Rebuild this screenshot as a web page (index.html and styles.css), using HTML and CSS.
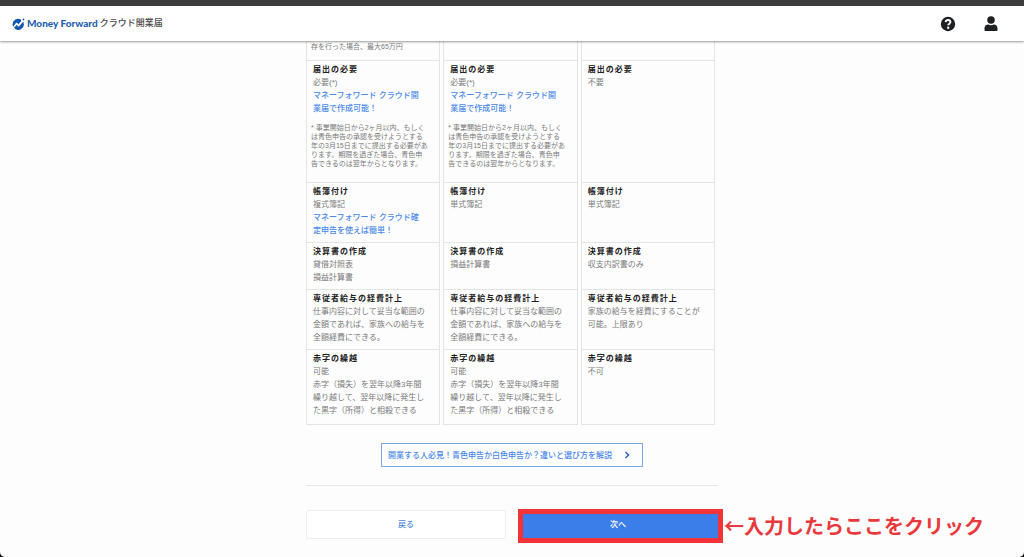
FILE: index.html
```html
<!DOCTYPE html>
<html lang="ja">
<head>
<meta charset="utf-8">
<meta name="viewport" content="width=device-width, initial-scale=1">
<title>Money Forward クラウド開業届</title>
<link rel="stylesheet" href="styles.css">
</head>
<body>
<div class="page">
  <header class="header">
    <a class="logo" href="#">
      <svg class="logo-mark" viewBox="0 0 26 24" aria-hidden="true">
        <path fill="#1459b0" d="M18 3.2A11 11 0 0 0 1 12.5c0 1.8.4 3.500 1.200 5L8 10.200c.8-1 2-.9 2.700 0l2 2.800 5.500-6.500z"/>
        <path fill="#1459b0" d="M4 19.500A11 11 0 0 0 23 9l-1-1.500-7.500 8.800c-.8 1-2 1-2.800 0l-2.200-2.900z"/>
        <circle cx="23" cy="3" r="1.800" fill="#1459b0"/>
      </svg>
      <span class="logo-name">Money Forward</span>
      <span class="logo-product">クラウド開業届</span>
    </a>
    <nav class="header-nav">
      <button class="icon-button" type="button" aria-label="ヘルプ">
        <svg class="icon" viewBox="0 0 16 16" aria-hidden="true">
          <circle cx="8" cy="8" r="7.200" fill="#1e2022"/>
          <path d="M5.600 6.200C5.800 4.600 6.900 4 8.100 4c1.300 0 2.300.8 2.300 2 0 1.700-2.200 1.600-2.200 3.300" fill="none" stroke="#fff" stroke-width="1.900"/>
          <circle cx="8.200" cy="11.700" r="1.200" fill="#fff"/>
        </svg>
      </button>
      <button class="icon-button" type="button" aria-label="アカウント">
        <svg class="icon" viewBox="0 0 16 16" aria-hidden="true">
          <circle cx="8" cy="4" r="3.800" fill="#1e2022"/>
          <path d="M1.500 14v-1.500C1.500 10 3 8.600 5.200 8.600c1.800.7 3.800.7 5.600 0 2.200 0 3.700 1.400 3.700 3.900V14c0 .6-.4 1-1 1h-11c-.6 0-1-.4-1-1z" fill="#1e2022"/>
        </svg>
      </button>
    </nav>
  </header>

  <main class="content">
    <table class="compare">
      <tbody>
        <tr class="row-first">
          <td><p class="note">存を行った場合、最大65万円</p></td>
          <td></td>
          <td></td>
        </tr>
        <tr>
          <td>
            <h2 class="term">届出の必要</h2>
            <p>必要(*)</p>
            <a href="#">マネーフォワード クラウド開<br>業届で作成可能！</a>
            <p class="note note-block">* 事業開始日から2ヶ月以内、もしく<br>は青色申告の承認を受けようとする<br>年の3月15日までに提出する必要があ<br>ります。期限を過ぎた場合、青色申<br>告できるのは翌年からとなります。</p>
          </td>
          <td>
            <h2 class="term">届出の必要</h2>
            <p>必要(*)</p>
            <a href="#">マネーフォワード クラウド開<br>業届で作成可能！</a>
            <p class="note note-block">* 事業開始日から2ヶ月以内、もしく<br>は青色申告の承認を受けようとする<br>年の3月15日までに提出する必要があ<br>ります。期限を過ぎた場合、青色申<br>告できるのは翌年からとなります。</p>
          </td>
          <td>
            <h2 class="term">届出の必要</h2>
            <p>不要</p>
          </td>
        </tr>
        <tr>
          <td>
            <h2 class="term">帳簿付け</h2>
            <p>複式簿記</p>
            <a href="#">マネーフォワード クラウド確<br>定申告を使えば簡単！</a>
          </td>
          <td>
            <h2 class="term">帳簿付け</h2>
            <p>単式簿記</p>
          </td>
          <td>
            <h2 class="term">帳簿付け</h2>
            <p>単式簿記</p>
          </td>
        </tr>
        <tr>
          <td>
            <h2 class="term">決算書の作成</h2>
            <p>貸借対照表<br>損益計算書</p>
          </td>
          <td>
            <h2 class="term">決算書の作成</h2>
            <p>損益計算書</p>
          </td>
          <td>
            <h2 class="term">決算書の作成</h2>
            <p>収支内訳書のみ</p>
          </td>
        </tr>
        <tr>
          <td>
            <h2 class="term">専従者給与の経費計上</h2>
            <p>仕事内容に対して妥当な範囲の<br>金額であれば、家族への給与を<br>全額経費にできる。</p>
          </td>
          <td>
            <h2 class="term">専従者給与の経費計上</h2>
            <p>仕事内容に対して妥当な範囲の<br>金額であれば、家族への給与を<br>全額経費にできる。</p>
          </td>
          <td>
            <h2 class="term">専従者給与の経費計上</h2>
            <p>家族の給与を経費にすることが<br>可能。上限あり</p>
          </td>
        </tr>
        <tr>
          <td>
            <h2 class="term">赤字の繰越</h2>
            <p>可能<br>赤字（損失）を翌年以降3年間<br>繰り越して、翌年以降に発生し<br>た黒字（所得）と相殺できる</p>
          </td>
          <td>
            <h2 class="term">赤字の繰越</h2>
            <p>可能<br>赤字（損失）を翌年以降3年間<br>繰り越して、翌年以降に発生し<br>た黒字（所得）と相殺できる</p>
          </td>
          <td>
            <h2 class="term">赤字の繰越</h2>
            <p>不可</p>
          </td>
        </tr>
      </tbody>
    </table>

    <a class="guide" href="#">
      <span>開業する人必見！青色申告か白色申告か？違いと選び方を解説</span>
      <svg class="chevron" viewBox="0 0 6 8" aria-hidden="true"><path d="M1.500 1l3 3-3 3" fill="none" stroke="#2f62c4" stroke-width="1.500"/></svg>
    </a>

    <div class="actions">
      <button class="button" type="button">戻る</button>
      <div class="next">
        <button class="button button-primary" type="button">次へ</button>
        <div class="highlight"></div>
        <span class="callout">←入力したらここをクリック</span>
      </div>
    </div>
  </main>
</div>
</body>
</html>
```

FILE: styles.css
```css
* {
  box-sizing: border-box;
}

html {
  background: #111;
}

body {
  margin: 0;
  color: #7a7a7a;
  font-family: "Liberation Sans", "Noto Sans CJK JP", sans-serif;
  font-size: 8px;
  line-height: 13px;
}

h2,
p {
  margin: 0;
}

a {
  color: #4a88ea;
  text-decoration: none;
}

button {
  font: inherit;
  cursor: pointer;
}

.page {
  min-height: 100vh;
  background: #fdfdfd;
  border-radius: 0 0 5px 5px;
}

.header {
  position: sticky;
  top: 0;
  z-index: 1;
  display: flex;
  align-items: center;
  justify-content: space-between;
  height: 41px;
  padding: 0 25px 0 12px;
  background: #fff;
  border-top: 6px solid #3d3d3d;
  box-shadow: 0 1px 2px rgba(0, 0, 0, 0.4);
}

.logo {
  display: flex;
  align-items: center;
  gap: 2px;
}

.logo-mark {
  width: 13px;
  height: 12px;
}

.logo-name {
  color: #1f5fae;
  font-family: Lato, sans-serif;
  font-size: 10px;
  font-weight: 900;
}

.logo-product {
  color: #4a4a4a;
  font-size: 9px;
  font-weight: 500;
}

.header-nav {
  display: flex;
  gap: 27px;
}

.icon-button {
  display: flex;
  padding: 0;
  background: none;
  border: 0;
}

.icon {
  width: 16px;
  height: 16px;
}

.content {
  max-width: 412px;
  margin: 0 auto;
}

.compare {
  width: calc(100% + 3px);
  margin-left: -3px;
  table-layout: fixed;
  border-spacing: 3px 0;
}

.compare td {
  padding: 3px 0 5px 6px;
  vertical-align: top;
  white-space: nowrap;
  border: 1px solid #e4e4e4;
  border-bottom: 0;
}

.compare tr:last-child td {
  padding-bottom: 7px;
  border-bottom: 1px solid #e4e4e4;
}

.compare .row-first td {
  padding: 1px 0 9px 6px;
  border-top: 0;
}

.compare a {
  display: block;
  font-weight: 500;
}

.term {
  color: #222;
  font-size: 8px;
  font-weight: 700;
  line-height: 12px;
  letter-spacing: 1px;
}

.note {
  margin-left: -2px;
  font-size: 7px;
  line-height: 9px;
}

.compare .note-block {
  padding: 8px 0 9px;
}

.guide {
  display: flex;
  align-items: center;
  justify-content: space-between;
  width: 262px;
  max-width: 100%;
  height: 24px;
  margin: 18px auto;
  padding: 0 12px 0 6px;
  font-weight: 500;
  border: 1px solid #7fa6e8;
}

.chevron {
  width: 6px;
  height: 8px;
}

.actions {
  display: grid;
  grid-template-columns: 1fr 1fr;
  gap: 12px;
  padding-top: 24px;
  border-top: 1px solid #e8e8e8;
}

.button {
  width: 100%;
  height: 29px;
  padding: 0;
  color: #4c86dc;
  font-weight: 500;
  background: #fff;
  border: 1px solid #eee;
  border-radius: 2px;
}

.button-primary {
  color: #fff;
  background: #3b7de9;
  border-color: #3b7de9;
}

.next {
  position: relative;
}

.highlight {
  position: absolute;
  inset: -1px -5px -4px 0;
  border: 5px solid #f33338;
  pointer-events: none;
}

.callout {
  position: absolute;
  top: 0;
  left: calc(100% + 6px);
  color: #e9393c;
  font-family: "Noto Sans CJK JP", sans-serif;
  font-size: 20px;
  font-weight: 700;
  line-height: 32px;
  white-space: nowrap;
}
```
